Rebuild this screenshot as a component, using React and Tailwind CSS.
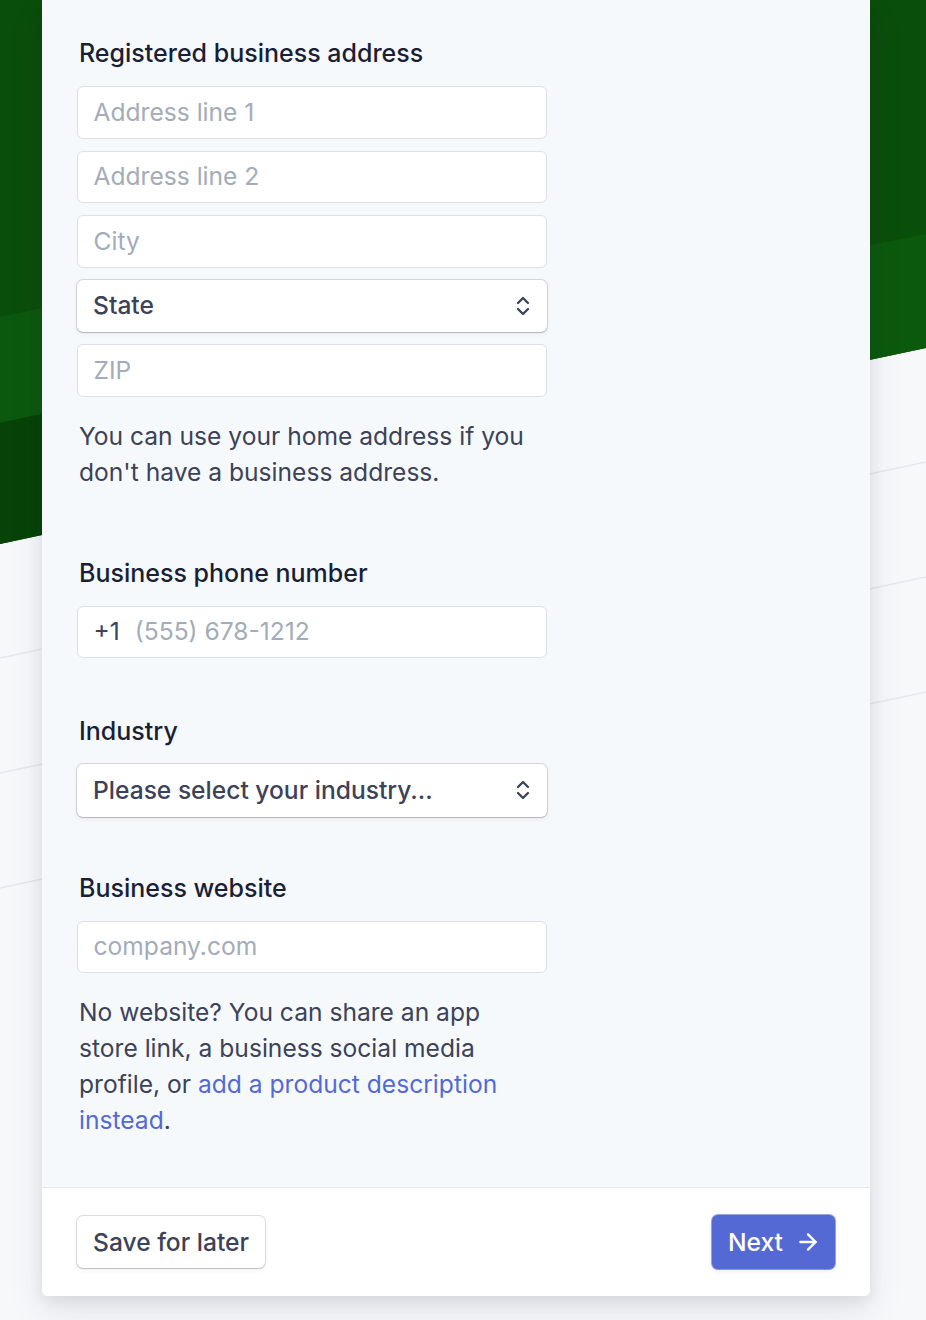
import React from "react";
import { ArrowRight } from "lucide-react";

function Chevrons() {
  return (
    <svg width="18" height="26" viewBox="0 0 18 26" fill="none" stroke="#3c4257" strokeWidth="2.3" strokeLinecap="round" strokeLinejoin="round">
      <path d="M4 10 L9 5 L14 10" />
      <path d="M4 16 L9 21 L14 16" />
    </svg>
  );
}

function Input({ placeholder }) {
  return (
    <div className="h-[52.5px] w-[470px] rounded-[6px] border border-[#dce1e7] bg-white pl-[15.5px] pr-[16px] flex items-center text-[24.6px] text-[#a3acb9]">
      {placeholder}
    </div>
  );
}

function Select({ value }) {
  return (
    <div className="h-[52.5px] w-[470px] rounded-[6px] bg-white pl-[16px] pr-[15px] flex items-center justify-between text-[24.6px] font-medium text-[#3c4257] shadow-[0_0_0_1px_rgba(60,66,87,0.18),0_2px_5px_rgba(60,66,87,0.08),0_1px_1px_rgba(0,0,0,0.12)]">
      <span>{value}</span>
      <Chevrons />
    </div>
  );
}

function Label({ children }) {
  return (
    <div className="pl-[2px] text-[25px] leading-[30px] font-medium text-[#1a1f36] mb-[18px]">{children}</div>
  );
}

export default function App() {
  return (
    <div className="relative w-[926px] h-[1320px] overflow-hidden bg-[#f7f8fa] font-['Inter',sans-serif]">
      <svg className="absolute inset-0" width="926" height="1320" viewBox="0 0 926 1320">
        <polygon points="0,0 926,0 926,348 0,544" fill="#0a4e0b" />
        <polygon points="0,317 60,304 60,410 0,423" fill="#0b590e" />
        <polygon points="0,423 60,410 60,531 0,544" fill="#074308" />
        <polygon points="860,247 926,234 926,348 860,362" fill="#0b590d" />
        <line x1="0" y1="658" x2="926" y2="462" stroke="#e4e7ec" strokeWidth="1.5" />
        <line x1="0" y1="773" x2="926" y2="577" stroke="#e4e7ec" strokeWidth="1.5" />
        <line x1="0" y1="888" x2="926" y2="692" stroke="#e4e7ec" strokeWidth="1.5" />
      </svg>

      <div className="relative ml-[42px] w-[828px] rounded-b-[6px] bg-white overflow-hidden shadow-[0_15px_35px_rgba(50,50,93,0.1),0_5px_15px_rgba(0,0,0,0.07)]">
        <div className="bg-[#f6f9fc] pl-[35px] pt-[38px] pb-[49px]">
          <Label>Registered business address</Label>
          <div className="flex flex-col gap-3">
            <Input placeholder="Address line 1" />
            <Input placeholder="Address line 2" />
            <Input placeholder="City" />
            <Select value="State" />
            <Input placeholder="ZIP" />
          </div>
          <p className="mt-[21px] pl-[2px] w-[470px] text-[24.6px] leading-[36px] text-[#3c4257]">
            You can use your home address if you don't have a business address.
          </p>

          <div className="mt-[68px]">
            <Label>Business phone number</Label>
            <div className="h-[52.5px] w-[470px] rounded-[6px] border border-[#dce1e7] bg-white pl-[15.5px] pr-[16px] flex items-center text-[24.6px]">
              <span className="text-[#3c4257] mr-[15px]">+1</span>
              <span className="text-[#a3acb9]">(555) 678-1212</span>
            </div>
          </div>

          <div className="mt-[58px]">
            <Label>Industry</Label>
            <Select value="Please select your industry..." />
          </div>

          <div className="mt-[56px]">
            <Label>Business website</Label>
            <Input placeholder="company.com" />
            <p className="mt-[21px] pl-[2px] w-[452px] text-[24.6px] leading-[36px] text-[#3c4257]">
              No website? You can share an app store link, a business social media profile, or{" "}
              <span className="text-[#5469d4]">add a product description instead</span>.
            </p>
          </div>
        </div>

        <div className="border-t border-[#e3e8ee] bg-white px-[35px] h-[109px] flex items-center justify-between">
          <button className="h-[52.5px] px-[16px] rounded-[6px] bg-white text-[24.6px] font-medium text-[#3c4257] shadow-[0_0_0_1px_rgba(60,66,87,0.16),0_2px_5px_rgba(60,66,87,0.08),0_1px_1px_rgba(0,0,0,0.12)]">
            Save for later
          </button>
          <button className="h-[54px] pl-[16px] pr-[14px] rounded-[6px] bg-[#5469d4] text-[24.6px] font-medium text-white flex items-center gap-[12px] shadow-[0_0_0_1px_rgba(84,105,212,0.6),0_2px_5px_rgba(60,66,87,0.1),0_1px_1px_rgba(0,0,0,0.12)]">
            Next
            <ArrowRight size={26} strokeWidth={2.2} />
          </button>
        </div>
      </div>
    </div>
  );
}
